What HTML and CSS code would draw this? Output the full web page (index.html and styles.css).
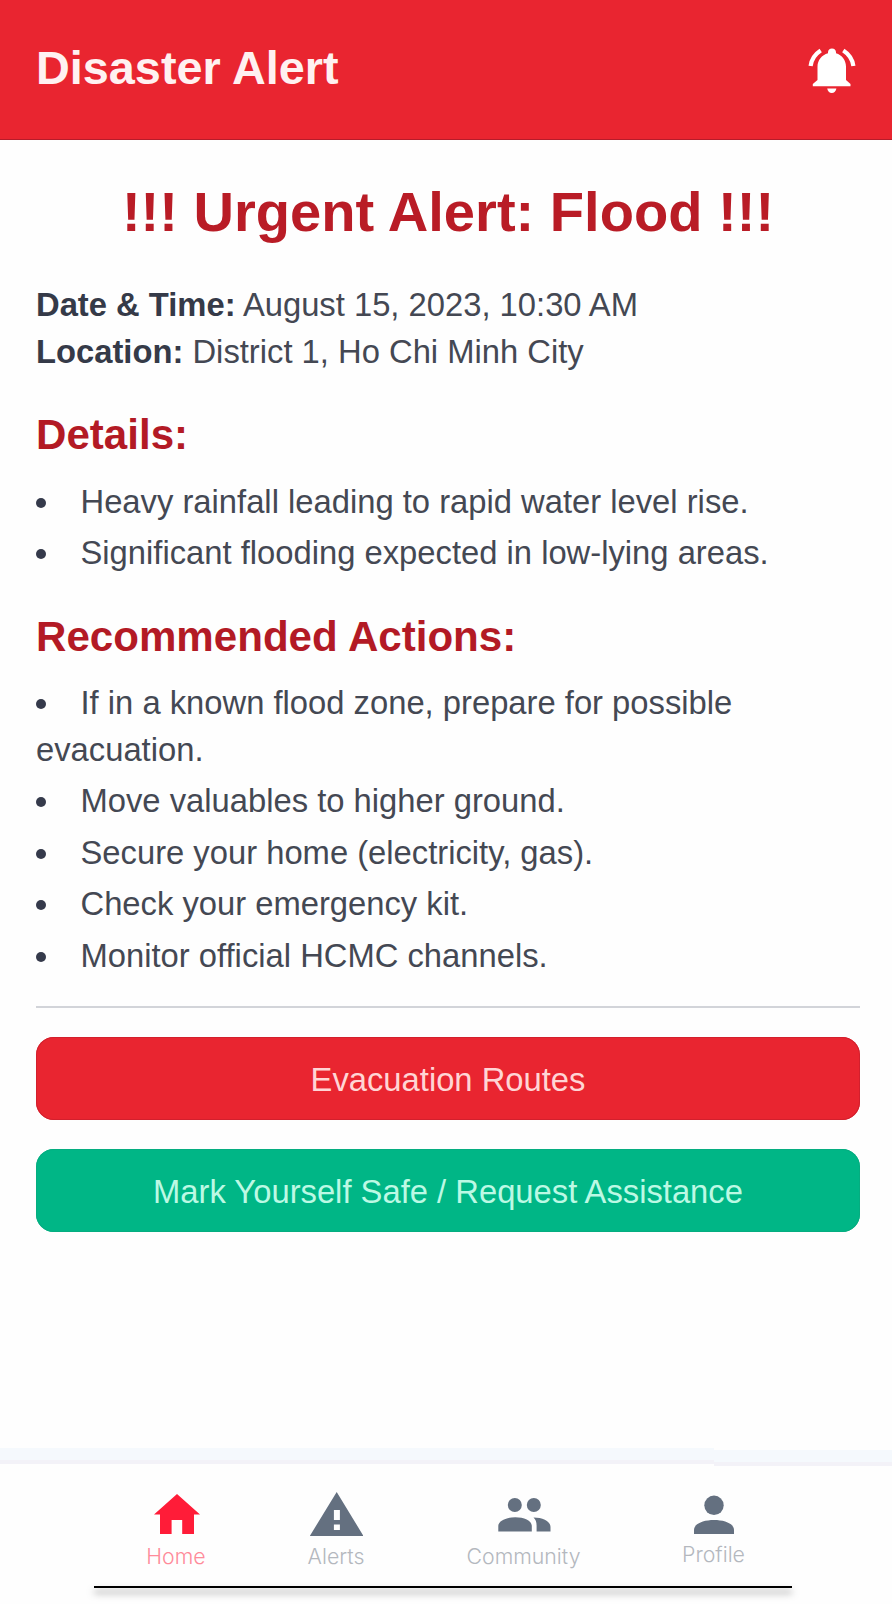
FILE: index.html
```html
<!DOCTYPE html>
<html lang="en">
<head>
<meta charset="utf-8">
<title>Disaster Alert</title>
<link rel="stylesheet" href="styles.css">
</head>
<body>
<div class="app">
  <header class="header">
    <div class="header-title">Disaster Alert</div>
    <svg class="bell" viewBox="0 0 48 48" width="48" height="48" fill="currentColor">
      <path d="M24 1.500c2.300 0 4 1.600 4 3.800v1c6 1.700 10 7 10 13.500v13.200l4.500 4v2.200H4.800V37l4.700-4V19.800c0-6.500 4.200-11.800 10.500-13.500v-1c0-2.200 1.700-3.800 4-3.800z"/>
      <path d="M19.200 41.500h9.200c-.4 2.700-2.200 4.500-4.600 4.500s-4.200-1.800-4.600-4.500z"/>
      <path d="M12.700 3.500C6.500 7.500 3.500 12 2.600 19M35.300 3.500c6.200 4 9.200 8.500 10.100 15.500" fill="none" stroke="currentColor" stroke-width="4.200"/>
    </svg>
  </header>
  <main class="content">
    <h1 class="alert-title">!!! Urgent Alert: Flood !!!</h1>
    <div class="meta">
      <div class="meta-date"><strong>Date &amp; Time:</strong> August 15, 2023, 10:30 AM</div>
      <div class="meta-place"><strong>Location:</strong> District 1, Ho Chi Minh City</div>
    </div>
    <h2 class="section-title">Details:</h2>
    <ul class="list">
      <li>Heavy rainfall leading to rapid water level rise.</li>
      <li>Significant flooding expected in low-lying areas.</li>
    </ul>
    <h2 class="section-title">Recommended Actions:</h2>
    <ul class="list">
      <li>If in a known flood zone, prepare for possible evacuation.</li>
      <li>Move valuables to higher ground.</li>
      <li>Secure your home (electricity, gas).</li>
      <li>Check your emergency kit.</li>
      <li>Monitor official HCMC channels.</li>
    </ul>
    <div class="actions">
      <button class="button button-red">Evacuation Routes</button>
      <button class="button button-green">Mark Yourself Safe / Request Assistance</button>
    </div>
  </main>
  <div class="band"><div class="band-left"></div><div class="band-right"></div></div>
  <nav class="nav">
    <a class="nav-item nav-home">
      <svg class="nav-icon" viewBox="0 0 54 46" width="54" height="46" fill="currentColor"><path d="M28 2 51 22.500h-6V42H33.200V28H22.600v14H11V22.500H5z"/></svg>
      <span class="nav-label">Home</span>
    </a>
    <a class="nav-item nav-alerts">
      <svg class="nav-icon" viewBox="0 0 54 46" width="54" height="46" fill="currentColor"><path fill-rule="evenodd" d="M27.700 0 54.500 44H.8zM24.900 18v10h6V18zm0 14.500V38h6v-5.500z"/></svg>
      <span class="nav-label">Alerts</span>
    </a>
    <a class="nav-item nav-community">
      <svg class="nav-icon" viewBox="0 0 54 46" width="54" height="46" fill="currentColor"><circle cx="17.800" cy="13" r="7"/><circle cx="36.800" cy="13" r="7"/><path d="M1.300 39.500V34c0-5.500 8.500-8.800 17-8.800s16.500 3.300 16.500 8.800v5.500zM36.500 25.600c9 0 17 3.800 17 9.300v4.600H39.600v-5.500c0-3.600-.8-6.400-3.100-8.400z"/></svg>
      <span class="nav-label">Community</span>
    </a>
    <a class="nav-item nav-profile">
      <svg class="nav-icon" viewBox="0 0 54 46" width="54" height="46" fill="currentColor"><circle cx="27" cy="13.300" r="9.700"/><path d="M7 42v-4c0-6.500 9.500-10 20-10s20 3.500 20 10v4z"/></svg>
      <span class="nav-label">Profile</span>
    </a>
  </nav>
  <div class="home-line"></div>
</div>
</body>
</html>
```
FILE: styles.css
```css
* { box-sizing: border-box; }
body { margin: 0; background: #fefefe; }
.app {
  display: flex;
  flex-direction: column;
  width: 892px;
  height: 1604px;
  overflow: hidden;
  font-family: "Liberation Sans", Arial, sans-serif;
  font-size: 32.75px;
  line-height: 46.9px;
  color: #444853;
}
.header {
  display: flex;
  justify-content: space-between;
  align-items: center;
  height: 139.500px;
  padding: 0 36px 0 36px;
  background: #e92530;
  border-bottom: 1px solid #b51c2a;
  color: #fff1f1;
}
.header-title { font-size: 46.800px; font-weight: 700; line-height: 66px; padding-bottom: 2px; }
.bell { display: block; margin-top: 4px; color: #fff; }
.content { height: 1308.500px; padding: 34px 32px 0 36px; }
.alert-title {
  margin: 0 0 33.500px;
  font-size: 56.100px;
  line-height: 75px;
  text-align: center;
  white-space: nowrap;
  color: #b91c26;
}
.meta { white-space: nowrap; }
.meta strong { color: #353a48; }
.section-title { margin: 26.500px 0 10.500px; font-size: 42.100px; line-height: 65.700px; color: #b31a25; }
.list { margin: 0; padding: 0; list-style: none; }
.list li { margin-bottom: 4.700px; }
.list li::before {
  content: "";
  display: inline-block;
  width: 10px;
  height: 10px;
  margin-right: 34.500px;
  border-radius: 50%;
  background: #353a4b;
  vertical-align: 5px;
}
.actions {
  display: flex;
  flex-direction: column;
  gap: 28.500px;
  margin-top: 26px;
  padding-top: 29px;
  border-top: 2px solid #d2d4d9;
}
.button {
  height: 83.500px;
  padding: 3px 0 0;
  border: 0;
  border-radius: 18px;
  font: inherit;
}
.button-red { background: #e92530; color: #ffd5d5; box-shadow: inset 0 0 0 1px #d2202d; }
.button-green { background: #00b686; color: #bcf9e4; box-shadow: inset 0 0 0 1px #05ad80; }
.band { display: flex; height: 18px; }
.band-left, .band-right { height: 16px; background: #f5f9fd; border-bottom: 4px solid #f3f2f8; }
.band-left { width: 714px; }
.band-right { width: 178px; margin-top: 2px; }
.nav { display: flex; height: 120px; padding: 26px 0 0 128px; }
.nav-item { display: flex; flex-direction: column; align-items: center; color: #647080; }
.nav-icon { display: block; }
.nav-label {
  margin-top: 3px;
  font: 300 21.300px/30px Inter, sans-serif;
  color: #b4b8be;
}
.nav-home { width: 96px; color: #ff1c38; }
.nav-home .nav-label { color: #ff8b9a; }
.nav-alerts { width: 224px; }
.nav-community { width: 151px; }
.nav-profile { width: 229px; }
.nav-profile .nav-label { margin-top: 1px; }
.home-line { flex: none; width: 698px; height: 2px; margin-left: 94px; background: #000; box-shadow: 0 5px 7px rgba(0, 0, 0, .5); }
```
